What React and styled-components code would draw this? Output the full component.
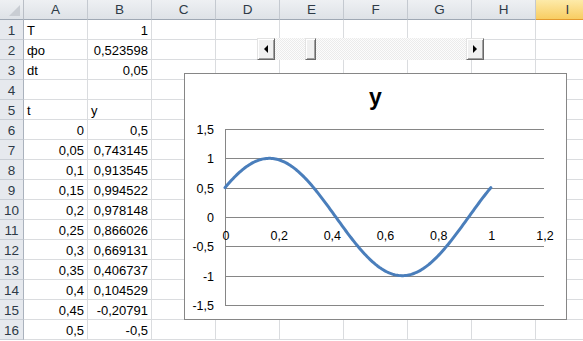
import React from 'react';
import styled, { createGlobalStyle } from 'styled-components';

const Global = createGlobalStyle`
  html, body { margin: 0; padding: 0; background: #fff; overflow: hidden; }
  body { font-family: "Liberation Sans", Arial, sans-serif; }
`;

const Sheet = styled.div`
  position: relative;
  width: 583px;
  height: 341px;
  overflow: hidden;
  background: #fff;
`;

const Grid = styled.div`
  display: grid;
  grid-template-columns: 24px repeat(9, 64px);
  grid-auto-rows: 20px;
`;

const Corner = styled.div`
  position: relative;
  box-sizing: border-box;
  background: linear-gradient(#eef0f3, #dee2e7);
  border-right: 1px solid #b9bec6;
  border-bottom: 1px solid #9fa8b4;
  &::after {
    content: '';
    position: absolute;
    right: 3px;
    bottom: 3px;
    width: 11px;
    height: 11px;
    background: #c9cdd3;
    clip-path: polygon(100% 0, 100% 100%, 0 100%);
  }
`;

const ColHeader = styled.div`
  box-sizing: border-box;
  background: ${p => (p.$selected ? 'linear-gradient(#fdeaa9, #f8cd62)' : 'linear-gradient(#eef0f3, #dee2e7)')};
  border-right: 1px solid ${p => (p.$selected ? '#e8b04a' : '#c4c9d0')};
  border-bottom: 1px solid ${p => (p.$selected ? '#e39a2f' : '#9fa8b4')};
  color: #2e3a47;
  font-size: 13.5px;
  line-height: 20px;
  text-align: center;
`;

const RowHeader = styled.div`
  box-sizing: border-box;
  background: #e6e9ee;
  border-right: 1px solid #aab2bd;
  border-bottom: 1px solid #c9ced5;
  color: #2e3a47;
  font-size: 13.5px;
  line-height: 20px;
  padding-top: 1px;
  text-align: center;
  overflow: hidden;
`;

const Cell = styled.div`
  box-sizing: border-box;
  border-right: 1px solid #dadcdf;
  border-bottom: 1px solid #dadcdf;
  color: #000;
  font-size: 13px;
  line-height: 20px;
  padding: 1px 3px 0;
  text-align: ${p => p.$align || 'left'};
  white-space: nowrap;
  overflow: hidden;
`;

const ScrollBar = styled.div`
  position: absolute;
  left: 257px;
  top: 38px;
  width: 227px;
  height: 22px;
  display: flex;
`;

const ArrowButton = styled.div`
  box-sizing: border-box;
  width: 18px;
  height: 22px;
  background: #f0f0f0;
  border: 1px solid;
  border-color: #e3e3e3 #696969 #696969 #e3e3e3;
  box-shadow: inset 1px 1px #fff, inset -1px -1px #a0a0a0;
  display: flex;
  align-items: center;
  justify-content: center;
  &::before {
    content: '';
    width: 0;
    height: 0;
    border-top: 4px solid transparent;
    border-bottom: 4px solid transparent;
    ${p => (p.$dir === 'left' ? 'border-right: 4px solid #000;' : 'border-left: 4px solid #000;')}
  }
`;

const Track = styled.div`
  position: relative;
  flex: 1;
  background: repeating-conic-gradient(#ebebeb 0% 25%, #fcfcfc 0% 50%) 0 0 / 2px 2px;
`;

const Thumb = styled.div`
  position: absolute;
  top: 0;
  box-sizing: border-box;
  width: 11px;
  height: 22px;
  background: #f0f0f0;
  border: 1px solid;
  border-color: #e3e3e3 #696969 #696969 #e3e3e3;
  box-shadow: inset 1px 1px #fff, inset -1px -1px #a0a0a0;
`;

const Chart = styled.div`
  position: absolute;
  left: 184px;
  top: 73px;
  width: 383px;
  height: 247px;
  box-sizing: border-box;
  border: 1px solid #868686;
  background: #fff;
  display: flex;
  flex-direction: column;
`;

const ChartTitle = styled.div`
  height: 34px;
  box-sizing: border-box;
  padding-top: 12px;
  font-size: 23px;
  line-height: 22px;
  font-weight: bold;
  text-align: center;
  color: #000;
`;

const Plot = styled.svg`
  display: block;
  flex: 1;
`;

const columns = ['A', 'B', 'C', 'D', 'E', 'F', 'G', 'H', 'I'];

const rows = [
  ['T', '1'],
  ['фо', '0,523598'],
  ['dt', '0,05'],
  ['', ''],
  ['t', 'y'],
  ['0', '0,5'],
  ['0,05', '0,743145'],
  ['0,1', '0,913545'],
  ['0,15', '0,994522'],
  ['0,2', '0,978148'],
  ['0,25', '0,866026'],
  ['0,3', '0,669131'],
  ['0,35', '0,406737'],
  ['0,4', '0,104529'],
  ['0,45', '-0,20791'],
  ['0,5', '-0,5'],
];

const isNum = s => /^-?[0-9]/.test(s);

const PL = 40, PR = 359, PT = 21, PB = 197;
const xOf = t => PL + (t / 1.2) * (PR - PL);
const yOf = v => PT + ((1.5 - v) / 3) * (PB - PT);

const yTicks = [1.5, 1, 0.5, 0, -0.5, -1, -1.5];
const xTicks = [0, 0.2, 0.4, 0.6, 0.8, 1, 1.2];
const fmt = v => String(v).replace('.', ',');

const curve = (() => {
  const pts = [];
  for (let i = 0; i <= 200; i++) {
    const t = i / 200;
    const v = Math.sin(2 * Math.PI * t + Math.PI / 6);
    pts.push(`${xOf(t).toFixed(2)},${yOf(v).toFixed(2)}`);
  }
  return pts.join(' ');
})();

export default function App() {
  return (
    <>
      <Global />
      <Sheet>
        <Grid>
          <Corner />
          {columns.map(c => (
            <ColHeader key={c} $selected={c === 'I'}>{c}</ColHeader>
          ))}
          {rows.map((r, i) => (
            <React.Fragment key={i}>
              <RowHeader>{i + 1}</RowHeader>
              {columns.map((c, j) => {
                const v = j < 2 ? r[j] : '';
                return (
                  <Cell key={c} $align={isNum(v) ? 'right' : 'left'}>{v}</Cell>
                );
              })}
            </React.Fragment>
          ))}
        </Grid>

        <ScrollBar>
          <ArrowButton $dir="left" />
          <Track>
            <Thumb style={{ left: 30 }} />
          </Track>
          <ArrowButton $dir="right" />
        </ScrollBar>

        <Chart>
          <ChartTitle>y</ChartTitle>
          <Plot width="381" height="211" viewBox="0 0 381 211">
            {yTicks.map(v => (
              <g key={v}>
                <line x1={PL} x2={PR} y1={Math.round(yOf(v)) + 0.5} y2={Math.round(yOf(v)) + 0.5} stroke="#868686" strokeWidth="1" />
                <text x="29" y={Math.round(yOf(v)) + 0.5} textAnchor="end" dominantBaseline="central" fontSize="12.5" fontFamily="Liberation Sans, Arial, sans-serif" fill="#000">{fmt(v)}</text>
              </g>
            ))}
            <line x1={PL + 0.5} x2={PL + 0.5} y1={PT} y2={PB + 1} stroke="#868686" strokeWidth="1" />
            {xTicks.map(t => (
              <text key={t} x={xOf(t) + 1} y="128" textAnchor="middle" dominantBaseline="central" fontSize="12.5" fontFamily="Liberation Sans, Arial, sans-serif" fill="#000">{fmt(t)}</text>
            ))}
            <polyline points={curve} fill="none" stroke="#4a7ebb" strokeWidth="3" strokeLinejoin="round" strokeLinecap="round" />
          </Plot>
        </Chart>
      </Sheet>
    </>
  );
}
